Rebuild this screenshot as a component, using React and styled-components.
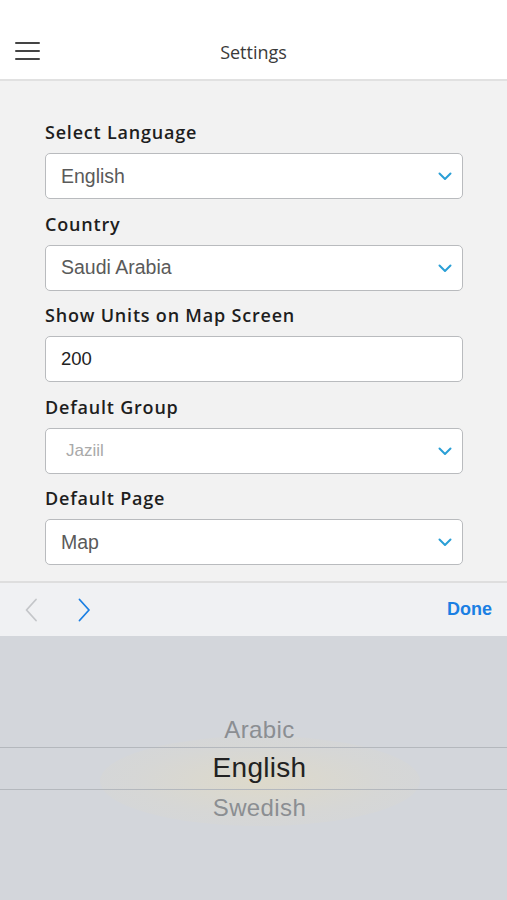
import React from "react";
import styled, { createGlobalStyle } from "styled-components";

const GlobalStyle = createGlobalStyle`
  html, body {
    margin: 0;
    padding: 0;
    background: #d3d6db;
  }
  body {
    font-family: "Open Sans", "Noto Sans", sans-serif;
  }
`;

const Screen = styled.div`
  width: 507px;
  height: 900px;
  display: flex;
  flex-direction: column;
  overflow: hidden;
`;

const Header = styled.div`
  height: 81px;
  background: #ffffff;
  border-bottom: 2px solid #e1e1e1;
  position: relative;
  display: flex;
  align-items: flex-end;
  justify-content: center;
  padding-bottom: 15px;
  box-sizing: border-box;
  flex-shrink: 0;
`;

const MenuButton = styled.div`
  position: absolute;
  left: 15px;
  top: 42px;
  width: 25px;
  display: flex;
  flex-direction: column;
  gap: 6px;

  span {
    display: block;
    height: 2px;
    background: #444;
    border-radius: 1px;
  }
`;

const Title = styled.div`
  font-family: "Open Sans", sans-serif;
  font-size: 18px;
  color: #3a3a3a;
  line-height: 24px;
`;

const Form = styled.div`
  background: #f2f2f2;
  flex: 0 0 502px;
  padding: 39px 44px 0 45px;
  box-sizing: border-box;
  display: flex;
  flex-direction: column;
  border-bottom: 2px solid #dedede;
`;

const Field = styled.div`
  display: flex;
  flex-direction: column;
  margin-bottom: 12.5px;
`;

const Label = styled.div`
  font-family: "Open Sans", sans-serif;
  font-weight: 600;
  font-size: 18px;
  letter-spacing: 0.8px;
  color: #1e1e1e;
  line-height: 24px;
  margin-bottom: 9px;
`;

const Box = styled.div`
  height: 46px;
  box-sizing: border-box;
  background: #ffffff;
  border: 1.5px solid #b9bbbe;
  border-radius: 5px;
  display: flex;
  align-items: center;
  justify-content: space-between;
  padding: 0 9px 0 ${(p) => (p.$muted ? 20 : 15)}px;
`;

const Value = styled.span`
  font-family: "Liberation Sans", Arial, sans-serif;
  font-size: ${(p) => (p.$muted ? 17 : p.$dark ? 18.5 : 19.5)}px;
  color: ${(p) => (p.$muted ? "#a9a9a9" : p.$dark ? "#222" : "#5a5a5a")};
`;

const Toolbar = styled.div`
  height: 53px;
  background: #f0f1f3;
  display: flex;
  align-items: center;
  padding: 0 15px 0 24px;
  gap: 38px;
  flex-shrink: 0;
`;

const Done = styled.div`
  margin-left: auto;
  font-family: "Liberation Sans", Arial, sans-serif;
  font-weight: 700;
  font-size: 18px;
  color: #1b7fe3;
`;

const Picker = styled.div`
  flex: 1;
  background: #d3d6db;
  position: relative;
  display: flex;
  flex-direction: column;
  align-items: center;
  padding: 76px 0 0 12px;
`;

const Glow = styled.div`
  position: absolute;
  left: 100px;
  top: 100px;
  width: 320px;
  height: 90px;
  border-radius: 50%;
  background: radial-gradient(ellipse at center, rgba(230, 220, 188, 0.55) 0%, rgba(222, 217, 200, 0.28) 55%, rgba(211, 214, 219, 0) 100%);
`;

const Option = styled.div`
  position: relative;
  font-family: "Liberation Sans", Arial, sans-serif;
  font-size: ${(p) => (p.$selected ? 28 : 24)}px;
  letter-spacing: ${(p) => (p.$selected ? 0.3 : 0.4)}px;
  color: ${(p) => (p.$selected ? "#222" : "#8b8e92")};
  line-height: ${(p) => (p.$selected ? 40 : 35)}px;
  height: ${(p) => (p.$selected ? 43 : 35)}px;
  width: 100%;
  text-align: center;
  box-sizing: border-box;
  ${(p) =>
    p.$selected &&
    `
    margin-left: -12px;
    width: calc(100% + 12px);
    padding-left: 12px;
    border-top: 1.5px solid #b4b8bd;
    border-bottom: 1.5px solid #b4b8bd;
    `}
`;

const Chevron = ({ color = "#2a9fd6", dir = "down" }) => {
  if (dir === "down") {
    return (
      <svg width="16" height="16" viewBox="0 0 16 16" fill="none">
        <path d="M2.5 5.5 L8 11 L13.5 5.5" stroke={color} strokeWidth="2" strokeLinecap="round" strokeLinejoin="round" />
      </svg>
    );
  }
  const d = dir === "left" ? "M12 1.5 L2.5 12 L12 22.5" : "M2.5 1.5 L12 12 L2.5 22.5";
  return (
    <svg width="15" height="24" viewBox="0 0 15 24" fill="none">
      <path d={d} stroke={color} strokeWidth="1.8" strokeLinecap="round" strokeLinejoin="round" />
    </svg>
  );
};

const fields = [
  { label: "Select Language", value: "English", select: true },
  { label: "Country", value: "Saudi Arabia", select: true },
  { label: "Show Units on Map Screen", value: "200", dark: true },
  { label: "Default Group", value: "Jaziil", select: true, muted: true },
  { label: "Default Page", value: "Map", select: true },
];

const App = () => {
  return (
    <Screen>
      <GlobalStyle />
      <Header>
        <MenuButton>
          <span />
          <span />
          <span />
        </MenuButton>
        <Title>Settings</Title>
      </Header>
      <Form>
        {fields.map((f) => (
          <Field key={f.label}>
            <Label>{f.label}</Label>
            <Box $muted={f.muted}>
              <Value $muted={f.muted} $dark={f.dark}>
                {f.value}
              </Value>
              {f.select && <Chevron />}
            </Box>
          </Field>
        ))}
      </Form>
      <Toolbar>
        <Chevron dir="left" color="#c4c6c9" />
        <Chevron dir="right" color="#1b7fe3" />
        <Done>Done</Done>
      </Toolbar>
      <Picker>
        <Glow />
        <Option>Arabic</Option>
        <Option $selected>English</Option>
        <Option>Swedish</Option>
      </Picker>
    </Screen>
  );
};

export default App;
